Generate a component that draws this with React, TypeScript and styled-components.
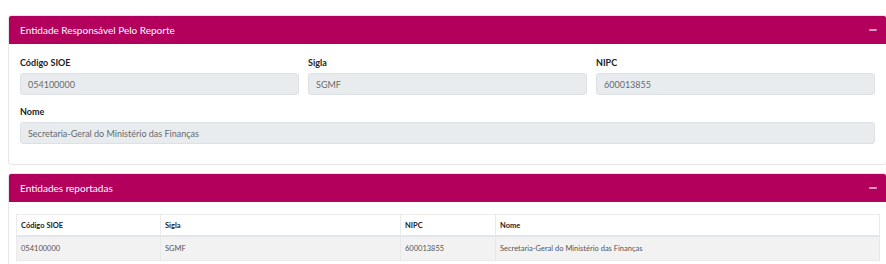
import styled, { createGlobalStyle } from "styled-components";

const GlobalStyle = createGlobalStyle`
	body {
		margin: 0;
		background: #ffffff;
		font-family: "Lato", "Open Sans", sans-serif;
		overflow: hidden;
	}
`;

const Page = styled.div`
	padding: 15px 0 0 8px;
	display: flex;
	flex-direction: column;
	gap: 8px;
`;

const Card = styled.section`
	width: 879px;
	background: #ffffff;
	border: 1px solid #e6e6e6;
	border-radius: 3px;
	box-sizing: border-box;
	overflow: hidden;
`;

const CardHeader = styled.div`
	height: 28px;
	background: #b2005c;
	display: flex;
	align-items: center;
	justify-content: space-between;
	padding: 0 9px 0 11px;
	color: #ffffff;
	font-size: 10px;
`;

const Collapse = styled.span`
	width: 8px;
	height: 2px;
	border-radius: 1px;
	background: rgba(255, 255, 255, 0.6);
`;

const FormBody = styled.div`
	padding: 13px 11px 20px 11px;
	display: flex;
	flex-direction: column;
	gap: 11px;
`;

const FieldRow = styled.div<{ $cols: number }>`
	display: grid;
	grid-template-columns: repeat(${(p) => p.$cols}, 1fr);
	column-gap: 9px;
`;

const Field = styled.div`
	display: flex;
	flex-direction: column;
	gap: 5px;
`;

const Label = styled.label`
	font-size: 9px;
	font-weight: 700;
	color: #222222;
`;

const Input = styled.div`
	height: 22px;
	box-sizing: border-box;
	background: #e9ecef;
	border: 1px solid #dde1e5;
	border-radius: 3px;
	padding: 0 7px;
	display: flex;
	align-items: center;
	font-size: 9px;
	color: #666a6e;
`;

const TableBody = styled.div`
	padding: 12px 7px 12px 7px;
`;

const Table = styled.table`
	width: 864px;
	border-collapse: collapse;
	font-size: 7.5px;
	table-layout: fixed;
	border: 1px solid #ebebeb;

	th {
		height: 20px;
		text-align: left;
		font-weight: 700;
		color: #222222;
		padding: 0 4px;
		border-right: 1px solid #ebebeb;
		border-bottom: 2px solid #e3e6ea;
	}

	td {
		height: 23px;
		background: #f2f2f2;
		color: #555555;
		padding: 0 4px;
		border-right: 1px solid #e8e8e8;
	}
`;

const fields = [
	{ label: "Código SIOE", value: "054100000" },
	{ label: "Sigla", value: "SGMF" },
	{ label: "NIPC", value: "600013855" },
];

export default function App() {
	return (
		<>
			<GlobalStyle />
			<Page>
				<Card>
					<CardHeader>
						<span>Entidade Responsável Pelo Reporte</span>
						<Collapse />
					</CardHeader>
					<FormBody>
						<FieldRow $cols={3}>
							{fields.map((f) => (
								<Field key={f.label}>
									<Label>{f.label}</Label>
									<Input>{f.value}</Input>
								</Field>
							))}
						</FieldRow>
						<FieldRow $cols={1}>
							<Field>
								<Label>Nome</Label>
								<Input>Secretaria-Geral do Ministério das Finanças</Input>
							</Field>
						</FieldRow>
					</FormBody>
				</Card>
				<Card>
					<CardHeader>
						<span>Entidades reportadas</span>
						<Collapse />
					</CardHeader>
					<TableBody>
						<Table>
							<colgroup>
								<col style={{ width: 144 }} />
								<col style={{ width: 240 }} />
								<col style={{ width: 95 }} />
								<col />
							</colgroup>
							<thead>
								<tr>
									<th>Código SIOE</th>
									<th>Sigla</th>
									<th>NIPC</th>
									<th>Nome</th>
								</tr>
							</thead>
							<tbody>
								<tr>
									<td>054100000</td>
									<td>SGMF</td>
									<td>600013855</td>
									<td>Secretaria-Geral do Ministério das Finanças</td>
								</tr>
							</tbody>
						</Table>
					</TableBody>
				</Card>
			</Page>
		</>
	);
}
